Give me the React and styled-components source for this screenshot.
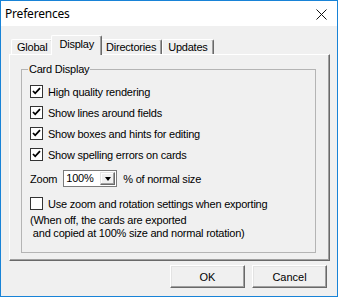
import React from 'react'
import styled, { createGlobalStyle } from 'styled-components'

const Global = createGlobalStyle`
  html, body {
    margin: 0;
    padding: 0;
    background: #f0f0f0;
  }
  * {
    box-sizing: border-box;
  }
`

const options = [
  { label: 'High quality rendering', checked: true },
  { label: 'Show lines around fields', checked: true },
  { label: 'Show boxes and hints for editing', checked: true },
  { label: 'Show spelling errors on cards', checked: true }
]

const tabs = ['Global', 'Display', 'Directories', 'Updates']

const CheckBox = ({ checked }) => (
  <Box>
    {checked && (
      <svg width='11' height='11' viewBox='0 0 11 11'>
        <path d='M2 5 L4.2 7.3 L9 2.2' fill='none' stroke='#000' strokeWidth='1.8' />
      </svg>
    )}
  </Box>
)

const CloseIcon = () => (
  <svg width='11' height='11' viewBox='0 0 11 11'>
    <path d='M0.5 0.5 L10.5 10.5 M10.5 0.5 L0.5 10.5' stroke='#111' strokeWidth='1' />
  </svg>
)

const App = () => {
  return (
    <Window>
      <Global />
      <TitleBar>
        <Title>Preferences</Title>
        <Close>
          <CloseIcon />
        </Close>
      </TitleBar>
      <Body>
        <TabRow>
          {tabs.map(t => (
            <Tab key={t} active={t === 'Display'}>
              {t}
            </Tab>
          ))}
        </TabRow>
        <Panel>
          <Group>
            <Legend>Card Display</Legend>
            {options.map(o => (
              <CheckRow key={o.label}>
                <CheckBox checked={o.checked} />
                <span>{o.label}</span>
              </CheckRow>
            ))}
            <ZoomRow>
              <span>Zoom</span>
              <Select>
                <SelectValue>100%</SelectValue>
                <DropButton>
                  <Arrow />
                </DropButton>
              </Select>
              <span>% of normal size</span>
            </ZoomRow>
            <CheckRow top={6}>
              <CheckBox checked={false} />
              <span>Use zoom and rotation settings when exporting</span>
            </CheckRow>
            <Note>
              {'(When off, the cards are exported\n and copied at 100% size and normal rotation)'}
            </Note>
          </Group>
        </Panel>
        <Buttons>
          <Button>OK</Button>
          <Button>Cancel</Button>
        </Buttons>
      </Body>
    </Window>
  )
}

export default App

//styles

const Window = styled.div`
  width: 338px;
  height: 297px;
  border: 1px solid #1883d7;
  display: flex;
  flex-direction: column;
  font-family: 'Liberation Sans', Arial, sans-serif;
  font-size: 11px;
  letter-spacing: -0.22px;
  color: #000;
  background: #f0f0f0;
`
const TitleBar = styled.div`
  height: 25px;
  background: #fff;
  display: flex;
  align-items: center;
  justify-content: space-between;
  padding: 0 10px 0 4px;
`
const Title = styled.div`
  font-family: 'Noto Sans', 'Liberation Sans', sans-serif;
  font-size: 12px;
  letter-spacing: -0.2px;
`
const Close = styled.div`
  display: flex;
  width: 11px;
  height: 11px;
  margin-top: 1px;
`
const Body = styled.div`
  flex: 1;
  display: flex;
  flex-direction: column;
  padding: 9px 7px 8px 8px;
`
const TabRow = styled.div`
  display: flex;
  align-items: flex-end;
  height: 19px;
  padding-left: 2px;
  position: relative;
  z-index: 1;
`
const Tab = styled.div`
  height: ${p => (p.active ? '20px' : '15px')};
  margin: ${p => (p.active ? '0 -2px -1px -2px' : '0')};
  padding: ${p => (p.active ? '2px 7px 0 7px' : '1px 5px 0 5px')};
  background: #f0f0f0;
  border-top: 1px solid #fff;
  border-left: 1px solid #fff;
  border-right: 1px solid #696969;
  box-shadow: inset -1px 0 0 #a0a0a0;
  border-radius: 2px 2px 0 0;
  line-height: 13px;
  position: relative;
  z-index: ${p => (p.active ? 2 : 1)};
  white-space: nowrap;
`
const Panel = styled.div`
  height: 207px;
  border-top: 1px solid #fff;
  border-left: 1px solid #fff;
  border-right: 1px solid #696969;
  border-bottom: 1px solid #696969;
  box-shadow: inset -1px -1px 0 #a0a0a0;
  padding: 8px 13px 0 11px;
`
const Group = styled.fieldset`
  margin: 0;
  min-width: 0;
  border: 1px solid #b4b4b4;
  padding: 5px 0 12px 8px;
  display: flex;
  flex-direction: column;
`
const Legend = styled.legend`
  padding: 0 1px;
  margin-left: -2px;
  line-height: 13px;
`
const CheckRow = styled.div`
  display: flex;
  align-items: center;
  gap: 5px;
  height: 21px;
  margin-top: ${p => (p.top ? `${p.top}px` : '0')};
`
const Box = styled.div`
  width: 13px;
  height: 13px;
  border: 1px solid #333;
  background: #fff;
  display: flex;
  align-items: center;
  justify-content: center;
  flex-shrink: 0;
`
const ZoomRow = styled.div`
  display: flex;
  align-items: center;
  gap: 6px;
  margin-top: 5px;
  height: 17px;
`
const Select = styled.div`
  width: 54px;
  height: 17px;
  background: #fff;
  border: 1px solid #7a7a7a;
  display: flex;
  align-items: center;
  justify-content: space-between;
  padding: 1px 1px 1px 2px;
`
const SelectValue = styled.span`
  line-height: 13px;
`
const DropButton = styled.div`
  width: 15px;
  height: 13px;
  background: #f0f0f0;
  border-top: 1px solid #e3e3e3;
  border-left: 1px solid #e3e3e3;
  border-right: 1px solid #696969;
  border-bottom: 1px solid #696969;
  box-shadow: inset -1px -1px 0 #a0a0a0, inset 1px 1px 0 #fff;
  display: flex;
  align-items: center;
  justify-content: center;
`
const Arrow = styled.div`
  width: 0;
  height: 0;
  border-left: 3.5px solid transparent;
  border-right: 3.5px solid transparent;
  border-top: 4px solid #000;
`
const Note = styled.div`
  white-space: pre;
  line-height: 13px;
`
const Buttons = styled.div`
  display: flex;
  justify-content: flex-end;
  gap: 7px;
  margin-top: 4px;
  padding-right: 3px;
`
const Button = styled.button`
  width: 75px;
  height: 23px;
  font-family: 'Liberation Sans', Arial, sans-serif;
  font-size: 11px;
  color: #000;
  background: #f0f0f0;
  border-top: 1px solid #fff;
  border-left: 1px solid #fff;
  border-right: 1px solid #696969;
  border-bottom: 1px solid #696969;
  box-shadow: inset -1px -1px 0 #a0a0a0, inset 1px 1px 0 #e3e3e3;
  padding: 0;
`
